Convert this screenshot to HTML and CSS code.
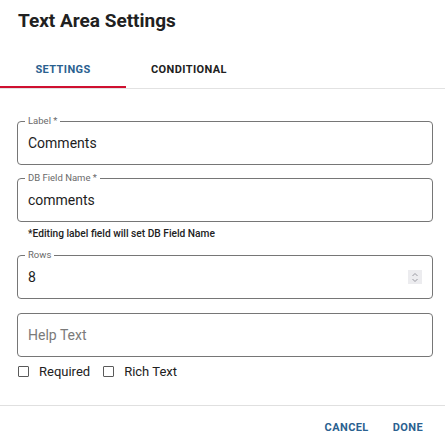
FILE: index.html
```html
<!DOCTYPE html>
<html>
<head>
<meta charset="utf-8">
<link rel="stylesheet" href="styles.css">
</head>
<body>
<div class="dialog">
  <h1 class="title">Text Area Settings</h1>
  <div class="tabs">
    <div class="tab active">SETTINGS</div>
    <div class="tab">CONDITIONAL</div>
  </div>
  <div class="content">
    <div class="field">
      <span class="flabel">Label *</span>
      <div class="value">Comments</div>
    </div>
    <div class="field">
      <span class="flabel">DB Field Name *</span>
      <div class="value">comments</div>
    </div>
    <div class="helper">*Editing label field will set DB Field Name</div>
    <div class="field rows">
      <span class="flabel">Rows</span>
      <div class="value">8</div>
      <div class="spin">
        <svg width="8" height="11" viewBox="0 0 8 11"><path d="M1.5 4 L4 1.5 L6.5 4" fill="none" stroke="#9a9aa2" stroke-width="1"/><path d="M1.5 7 L4 9.5 L6.5 7" fill="none" stroke="#9a9aa2" stroke-width="1"/></svg>
      </div>
    </div>
    <div class="field help">
      <div class="value placeholder">Help Text</div>
    </div>
    <div class="checks">
      <label class="check"><span class="box"></span>Required</label>
      <label class="check"><span class="box"></span>Rich Text</label>
    </div>
  </div>
  <div class="footer">
    <span class="btn">CANCEL</span>
    <span class="btn">DONE</span>
  </div>
</div>
</body>
</html>
```
FILE: styles.css
```css
* { box-sizing: border-box; }
html, body { margin: 0; padding: 0; background: #fff; }
body { font-family: Roboto, "Liberation Sans", Arial, sans-serif; color: #222; }
.dialog { width: 445px; height: 447px; display: flex; flex-direction: column; }
.title { margin: 0; padding: 9px 0 0 18px; font-size: 19px; font-weight: 700; line-height: 24px; color: #212121; height: 50px; }
.tabs { display: flex; border-bottom: 1px solid #e2e2e2; height: 39px; }
.tab { width: 126px; display: flex; align-items: center; justify-content: center; font-size: 11px; font-weight: 700; letter-spacing: 0.4px; color: #212121; padding-top: 1px; }
.tab.active { color: #2a6190; border-bottom: 2px solid #cf1030; padding-top: 3px; }
.content { padding: 32px 12px 0 17px; display: flex; flex-direction: column; }
.field { position: relative; height: 44px; border: 1px solid #767676; border-radius: 4px; display: flex; align-items: center; padding: 0 10px; }
.field + .field { margin-top: 13px; }
.flabel { position: absolute; top: -6px; left: 7px; background: #fff; padding: 0 3px; font-size: 9.5px; line-height: 10px; color: #6a6a6a; }
.value { font-size: 14px; color: #1d1d1d; flex: 1; }
.placeholder { color: #7a7a7a; }
.helper { font-size: 10.2px; font-weight: 500; color: #222; padding: 6px 0 0 11px; height: 33px; }
.spin { width: 14px; height: 14px; background: #ececef; display: flex; align-items: center; justify-content: center; }
.field.help { margin-top: 14px; }
.checks { display: flex; gap: 13px; padding: 7px 0 0 1px; }
.check { display: flex; align-items: center; font-size: 13px; color: #212121; }
.box { width: 11px; height: 11px; border: 1px solid #5a5a5a; border-radius: 1px; margin-right: 10px; }
.footer { margin-top: auto; border-top: 1px solid #e0e0e0; height: 42px; display: flex; justify-content: flex-end; align-items: center; gap: 24px; padding-right: 22px; }
.btn { font-size: 11px; font-weight: 700; letter-spacing: 0.4px; color: #2a6190; padding-top: 2px; }
```
